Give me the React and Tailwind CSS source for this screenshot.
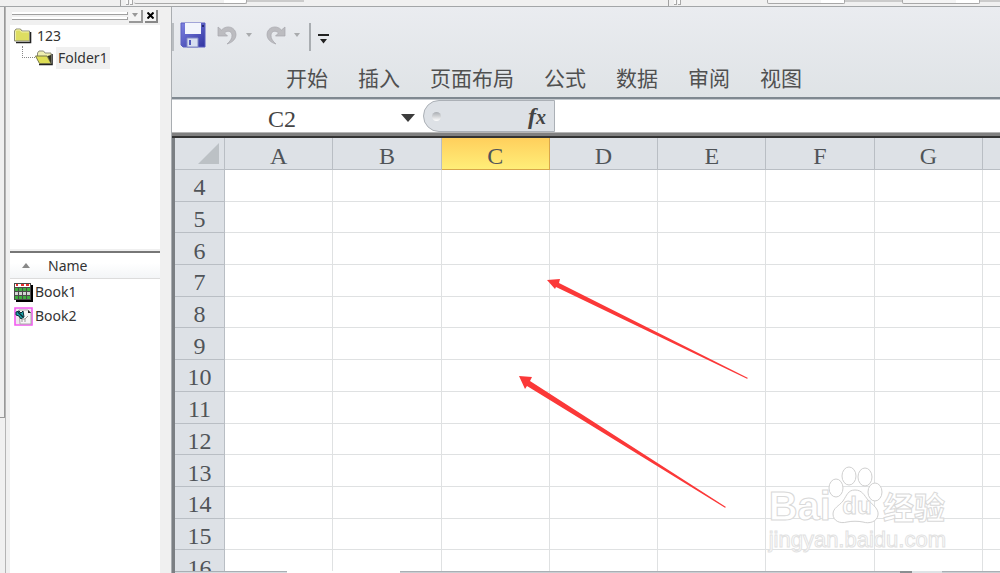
import React, { useState } from 'react';

const MENUS = ['开始', '插入', '页面布局', '公式', '数据', '审阅', '视图'];
const COLUMNS = ['A', 'B', 'C', 'D', 'E', 'F', 'G'];
const ROWS = [4, 5, 6, 7, 8, 9, 10, 11, 12, 13, 14, 15, 16];

const Grip = () => (
  <div className="flex gap-px">
    <div className="h-full w-[3px] border-r border-b border-[#a8a8a8] bg-[#fafafa]" />
    <div className="h-full w-[3px] border-r border-b border-[#a8a8a8] bg-[#fafafa]" />
  </div>
);

const TopStrip = () => (
  <div className="flex h-[6px] shrink-0 bg-[#f0f0f0]">
    <div className="flex flex-[669]">
      <div className="w-[121px] border-r border-[#a0a0a0]" />
      <div className="ml-[5px] flex h-[5px]"><Grip /></div>
      <div className="ml-px h-[4px] w-[113px] rounded-b-xs border-r border-b border-[#a8a8a8] bg-gradient-to-r from-[#f0f0f0] from-80% to-white to-80%" />
      <div className="h-[2px] w-[57px] bg-[#cbcbcb]" />
    </div>
    <div className="flex flex-[331] border-l border-[#a0a0a0]">
      <div className="ml-[5px] flex h-[5px]"><Grip /></div>
      <div className="ml-[86px] h-[4px] w-[78px] rounded-b-xs border-x border-b border-[#a8a8a8] bg-gradient-to-r from-[#f4f4f4] from-70% to-white to-70%" />
      <div className="h-[2px] w-[57px] bg-[#cbcbcb]" />
      <div className="h-[4px] w-[78px] rounded-b-xs border-x border-b border-[#a8a8a8] bg-gradient-to-r from-[#f4f4f4] from-70% to-white to-70%" />
      <div className="h-[2px] grow bg-[#cbcbcb]" />
    </div>
  </div>
);

const FolderIcon = () => (
  <svg viewBox="0 0 18 16" className="h-4 w-[18px]">
    <path d="M2 14.500h14.500V4" fill="none" stroke="#222" strokeWidth="1.600" />
    <path d="M.5 13V3L2 1h4.500L8 3h7.500v10z" fill="#dede62" stroke="#8c8c7c" />
    <path d="M1.500 12V3.500L2.500 2H6l1.500 2H15" fill="none" stroke="#f6f6c0" strokeWidth=".8" />
  </svg>
);

const OpenFolderIcon = () => (
  <svg viewBox="0 0 18 16" className="h-4 w-[18px]">
    <path d="M4 14.500h13V4" fill="none" stroke="#222" strokeWidth="1.600" />
    <path d="M2.500 7V3L4 1h4.500L10 3h6v10" fill="#eeeeb0" stroke="#8c8c7c" />
    <path d="M.5 6h11.500l4 7.500H4.500z" fill="#dede55" stroke="#77774a" />
    <path d="M12.500 6l3.500 7.500V5z" fill="#333322" />
  </svg>
);

const SheetIcon = () => (
  <svg viewBox="0 0 19 19" className="h-[19px] w-[19px]">
    <path d="M2 2h17v17H2z" fill="#000" />
    <path d="M0 0h17v17H0z" fill="#4a4a4a" />
    <path d="M1 1h15v3H1z" fill="#fff" />
    <path d="M2 1h2v2H2zM7 1h3v2H7zM12 1h3v2h-3z" fill="#e83030" />
    <path d="M1 5h3v3H1zM5 5h3v3H5zM9 5h3v3H9zM13 5h3v3h-3zM1 13h3v3H1zM5 13h3v3H5zM9 13h3v3H9zM13 13h3v3h-3z" fill="#3fae3f" />
    <path d="M1 9h3v3H1zM5 9h3v3H5zM9 9h3v3H9zM13 9h3v3h-3z" fill="#d4d4d4" />
  </svg>
);

const GraphIcon = () => (
  <svg viewBox="0 0 19 19" className="h-[19px] w-[19px]">
    <path d="M1 1h17v17H1z" fill="#f0e6f0" stroke="#f35af0" strokeWidth="1.600" />
    <path d="M5 3h9l3 3v11H6z" fill="#f6f6f6" stroke="#aaa" />
    <path d="M14 3v3h3z" fill="#222" />
    <path d="M2 5l3-1 2 2 2-2 1 6-3 2-2-3-3-1z" fill="#1aa8ae" stroke="#0b2c36" />
    <path d="M4 5l5 5" stroke="#0b2c36" strokeWidth="1.500" />
    <path d="M8 15v-3h3v3M11 12l3-3" fill="none" stroke="#999" />
  </svg>
);

const Explorer = () => (
  <aside className="flex w-[166px] shrink-0 flex-col border-l border-[#b4b4b4] bg-[#f0f0f0] pr-[11px] pl-1 font-['Noto_Sans','Open_Sans',sans-serif] text-sm leading-6 text-[#333]">
    <div className="flex h-[18px] shrink-0 items-center gap-px px-[2px]">
      <div className="flex grow flex-col gap-[2px]">
        <div className="h-[3px] border-r border-b border-[#a0a0a0] bg-white" />
        <div className="h-[3px] border-r border-b border-[#a0a0a0] bg-white" />
      </div>
      <button aria-label="Menu" className="flex h-[13px] w-[14px] items-center justify-center border-r-2 border-b-2 border-[#999] bg-[#f4f4f4]">
        <svg viewBox="0 0 6 4" className="h-1 w-[6px]"><path d="M0 0h6L3 4z" fill="#999" /></svg>
      </button>
      <button aria-label="Close" className="ml-px flex h-[13px] w-[13px] items-center justify-center border-r-2 border-b-2 border-[#888] bg-[#f4f4f4]">
        <svg viewBox="0 0 7 7" className="h-[7px] w-[7px]"><path d="M.5.500l6 6M6.500.500l-6 6" stroke="#000" strokeWidth="2" /></svg>
      </button>
    </div>
    <div className="h-[224px] shrink-0 bg-white pl-1">
      <div className="flex h-[22px] items-center gap-[5px]"><FolderIcon />123</div>
      <div className="flex h-[22px] items-center">
        <div className="mb-3 ml-2 h-3 w-[13px] border-b border-l border-dotted border-[#888]" />
        <OpenFolderIcon />
        <span className="ml-[3px] bg-[#f0f0f0] px-[2px] leading-[22px]">Folder1</span>
      </div>
    </div>
    <div className="mt-[2px] flex h-[28px] shrink-0 items-center border-t-2 border-b border-t-[#777] border-b-[#dcdcdc] bg-gradient-to-b from-white from-40% to-[#f3f5f7] pl-3">
      <svg viewBox="0 0 8 5" className="h-[5px] w-2"><path d="M0 5h8L4 0z" fill="#888" /></svg>
      <span className="ml-[18px]">Name</span>
    </div>
    <ul className="grow bg-white pt-px pl-1">
      <li className="flex items-center gap-[2px]"><SheetIcon />Book1</li>
      <li className="flex items-center gap-[2px]"><GraphIcon />Book2</li>
    </ul>
  </aside>
);

const SmallCaret = () => (
  <svg viewBox="0 0 6 4" className="h-1 w-[6px]"><path d="M0 0h6L3 4z" fill="#a9abad" /></svg>
);

const UndoArrow = ({ className }) => (
  <svg viewBox="0 0 20 20" className={className}>
    <path d="M1 2v9h9.500L7.500 8c3-3 7-2 7.500 2 .3 3.500-2 6.500-5 9 5.500-1.500 9-5 9-9.500C19 2.500 10-1 4.500 5z" fill="#bcbcc0" stroke="#a8a8ad" strokeWidth=".7" />
  </svg>
);

const QuickAccess = () => (
  <div className="flex h-[60px] items-center">
    <div className="h-7 w-[2px] bg-[#b9bdc1]" />
    <button aria-label="Save" className="mb-1 ml-[6px]">
      <svg viewBox="0 0 26 26" className="h-[26px] w-[26px]">
        <defs>
          <linearGradient id="disk" x1="0" x2="1" y2="1">
            <stop offset="0" stopColor="#7e83e2" />
            <stop offset="1" stopColor="#3034a0" />
          </linearGradient>
        </defs>
        <path d="M1 1h24v24H3l-2-2z" fill="url(#disk)" stroke="#5a5ec0" />
        <path d="M5 1h16v11H5z" fill="#f2f5fc" />
        <path d="M22 3h2v2h-2z" fill="#252a70" />
        <path d="M7 16h11v9H7z" fill="#d7def0" stroke="#8088c4" />
        <path d="M9 18h2v5H9z" fill="#5259bd" />
      </svg>
    </button>
    <button aria-label="Undo" className="mb-1 ml-[11px]"><UndoArrow className="h-5 w-5" /></button>
    <button aria-label="Undo history" className="mb-1 ml-[9px]"><SmallCaret /></button>
    <button aria-label="Redo" className="mb-1 ml-[14px]"><UndoArrow className="h-5 w-5 -scale-x-100" /></button>
    <button aria-label="Redo history" className="mb-1 ml-[8px]"><SmallCaret /></button>
    <div className="ml-[9px] h-7 w-[2px] bg-[#a9adb1]" />
    <button aria-label="Customize" className="mt-1 ml-[7px]">
      <svg viewBox="0 0 11 10" className="h-[10px] w-[11px]"><path d="M0 0h11v2H0zM2 5h7L5.500 9.500z" fill="#222" /></svg>
    </button>
  </div>
);

const FormulaBar = () => {
  const [cell, setCell] = useState('C2');
  const [formula, setFormula] = useState('');

  return (
    <div className="flex h-[32px] shrink-0 bg-white">
      <input
        aria-label="Name box"
        value={cell}
        onChange={(e) => setCell(e.target.value)}
        className="w-[220px] pt-[5px] text-center font-['Liberation_Serif','Noto_Sans_CJK_SC',serif] text-2xl text-[#444] outline-none"
      />
      <button aria-label="Cell names" className="flex w-[31px] items-center justify-end pt-1 pr-2">
        <svg viewBox="0 0 14 8" className="h-2 w-[14px]"><path d="M0 0h14L7 8z" fill="#3c3c3c" /></svg>
      </button>
      <div className="flex w-[132px] items-center justify-between rounded-l-full border border-[#abb0b6] bg-[#dde1e6] px-2">
        <div className="h-[9px] w-[9px] rounded-full bg-gradient-to-b from-[#a9adb2] to-white" />
        <button aria-label="Insert function" className="font-['Liberation_Serif',serif] text-2xl leading-7 font-bold text-[#444] italic">
          f<span className="text-xl">x</span>
        </button>
      </div>
      <input
        aria-label="Formula"
        value={formula}
        onChange={(e) => setFormula(e.target.value)}
        className="min-w-0 grow px-2 text-xl outline-none"
      />
    </div>
  );
};

const Sheet = () => (
  <table className="h-[444px] w-full table-fixed border-separate border-spacing-0 font-['Liberation_Serif','Noto_Sans_CJK_SC',serif] text-2xl leading-6 text-[#505458]">
    <colgroup>
      <col className="w-[50px]" />
      {COLUMNS.map((c) => <col key={c} />)}
      <col className="w-[17px]" />
    </colgroup>
    <thead>
      <tr className="h-[32px] bg-[#dde1e6]">
        <td className="border-r border-b border-[#b9bec4] p-0">
          <svg viewBox="0 0 21 21" className="ml-auto mr-[5px] h-[21px] w-[21px]"><path d="M21 0v21H0z" fill="#bcc1c5" /></svg>
        </td>
        {COLUMNS.map((c) => (
          <th
            key={c}
            scope="col"
            className={
              c === 'C'
                ? 'border-r border-b border-[#d8a64a] bg-gradient-to-b from-[#ffcf5c] to-[#ffee78] p-0 pt-1 font-normal'
                : 'border-r border-b border-[#b9bec4] p-0 pt-1 font-normal'
            }
          >
            {c}
          </th>
        ))}
        <td className="border-b border-[#b9bec4] p-0" />
      </tr>
    </thead>
    <tbody>
      {ROWS.map((r) => (
        <tr key={r}>
          <th scope="row" className="border-r border-b border-[#b9bec4] bg-[#dde1e6] p-0 pt-1 font-normal">{r}</th>
          {COLUMNS.map((c) => <td key={c} className="border-r border-b border-[#dfe1e2] p-0" />)}
          <td className="border-b border-[#dfe1e2] p-0" />
        </tr>
      ))}
    </tbody>
  </table>
);

const Arrows = () => (
  <svg viewBox="0 0 240 240" className="pointer-events-none absolute top-[133px] left-[339px] h-[240px] w-[240px]">
    <path d="M33 9l13-1-1 4 189 95-1 .7L42 16l-1 2z" fill="#fb3838" />
    <path d="M5 105l13 1-2 4 196 126-1 .7L13 115l-2 3z" fill="#fb3838" />
  </svg>
);

const Watermark = () => (
  <div className="pointer-events-none absolute right-[54px] bottom-[19px] whitespace-nowrap text-white [-webkit-text-stroke:1px_#d9d9d9]">
    <div className="flex h-[60px] items-end">
      <span className="font-['Liberation_Sans',sans-serif] text-[40px] leading-10 font-bold">Bai</span>
      <div className="relative h-[60px] w-[52px]">
        <svg viewBox="0 0 52 60" className="h-[60px] w-[52px] overflow-visible" fill="#fff" stroke="#d0d0d0">
          <ellipse cx="5" cy="22" rx="7" ry="9" />
          <ellipse cx="18" cy="10" rx="7" ry="9" />
          <ellipse cx="34" cy="11" rx="7" ry="9" />
          <ellipse cx="44" cy="26" rx="7" ry="9" />
          <path d="M24 24c7 0 9 5 13 10 5 5 11 9 10 15-1 7-9 9-15 7-5-1-11-1-16 0-7 2-14-1-14-8 0-6 6-8 10-13 4-6 5-11 12-11z" />
        </svg>
        <span className="absolute inset-x-0 bottom-2 text-center font-['Liberation_Sans',sans-serif] text-2xl leading-6 font-bold">du</span>
      </div>
      <span className="font-['Noto_Sans_CJK_SC',sans-serif] text-[31px] leading-10 font-bold">经验</span>
    </div>
    <div className="font-['Liberation_Sans',sans-serif] text-[22px] leading-7 [-webkit-text-stroke:1px_#e2e2e2]">jingyan.baidu.com</div>
  </div>
);

const App = () => {
  return (
    <div className="flex h-screen flex-col overflow-hidden bg-[#f0f0f0]">
      <TopStrip />
      <div className="flex min-h-0 grow border-t border-[#a3a6a8]">
        <div className="w-[5px] shrink-0 bg-[#f0f0f0]">
          <div className="h-[411px] border-r border-b border-[#999]" />
        </div>
        <Explorer />
        <main className="flex min-w-0 grow flex-col border-l border-[#a9adb1]">
          <header className="h-[90px] shrink-0 bg-gradient-to-b from-[#eaecf0] to-[#dfe3e6]">
            <QuickAccess />
            <nav className="-mt-[6px] flex gap-[30px] pl-[114px] font-['Noto_Sans_CJK_SC',sans-serif] text-[21px] leading-8 text-[#505050]">
              {MENUS.map((m) => <button key={m}>{m}</button>)}
            </nav>
          </header>
          <div className="h-[3px] shrink-0 border-b border-[#c5cacf] bg-[#7f8890]" />
          <FormulaBar />
          <div className="h-[6px] shrink-0 border-t border-b-2 border-t-[#b5b5b5] border-b-[#333] bg-[#808080]" />
          <div className="relative flex min-h-0 grow flex-col border-l-3 border-[#7b7f83] bg-white">
            <div className="min-h-0 grow overflow-hidden"><Sheet /></div>
            <div className="flex h-[2px] shrink-0">
              <div className="w-[112px] border-t border-[#a9afb4] bg-[#d5dade]" />
              <div className="w-[113px]" />
              <div className="grow border-t border-[#a9afb4] bg-[#c9ced2]" />
              <div className="w-[12px] bg-[#8a8e91]" />
              <div className="w-[30px] bg-[#dfe3e6]" />
              <div className="w-[58px] border-t border-[#a9afb4] bg-[#c9ced2]" />
            </div>
            <Arrows />
            <Watermark />
          </div>
        </main>
      </div>
    </div>
  );
};

export default App;
